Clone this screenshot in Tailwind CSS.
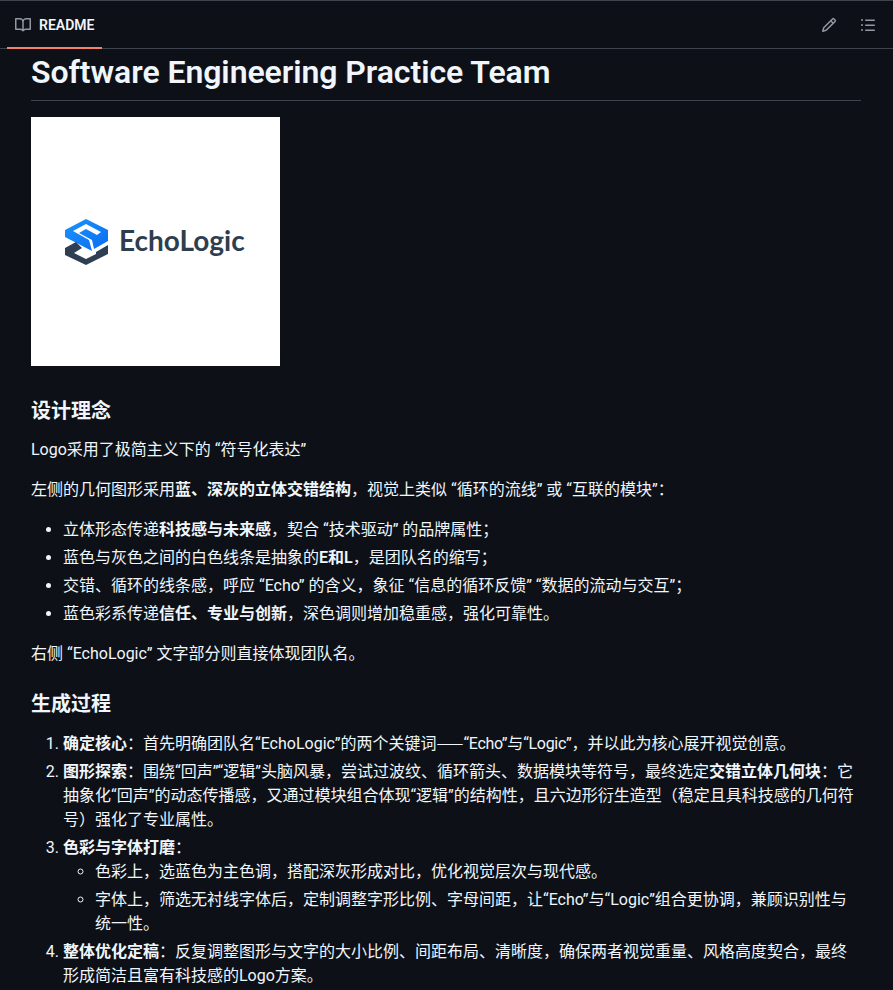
<!DOCTYPE html>
<html lang="en">
<head>
    <meta charset="UTF-8">
    <title>README</title>
    <script src="https://cdn.jsdelivr.net/npm/@tailwindcss/browser@4"></script>
</head>
<body class="bg-[#0d1117] text-[#f0f6fc] text-base leading-6 font-['Roboto','Noto_Sans_CJK_SC',sans-serif] overflow-hidden h-[990px]">

    <div class="border-t border-[#3d444d] h-[49px] border-b flex items-center justify-between relative">
        <div class="flex items-center pl-[15px] gap-2 h-full">
            <svg class="w-4 h-4 fill-[#9198a1]" viewBox="0 0 16 16"><path d="M0 1.75A.75.75 0 0 1 .75 1h4.253c1.227 0 2.317.59 3 1.501A3.743 3.743 0 0 1 11.006 1h4.245a.75.75 0 0 1 .75.75v10.5a.75.75 0 0 1-.75.75h-4.507a2.25 2.25 0 0 0-1.591.659l-.622.621a.75.75 0 0 1-1.06 0l-.622-.621A2.25 2.25 0 0 0 5.258 13H.75a.75.75 0 0 1-.75-.75Zm7.251 10.324.004-5.073-.002-2.253A2.25 2.25 0 0 0 5.003 2.5H1.5v9h3.757a3.75 3.75 0 0 1 1.994.574ZM8.755 4.75l-.004 7.322a3.752 3.752 0 0 1 1.992-.572H14.5v-9h-3.495a2.25 2.25 0 0 0-2.25 2.25Z"/></svg>
            <span class="text-sm font-semibold">README</span>
        </div>
        <div class="absolute left-[7px] bottom-[-1px] w-[95px] h-[2px] bg-[#f78166]"></div>
        <div class="flex items-center gap-[23px] pr-[17px]">
            <svg class="w-4 h-4 fill-[#9198a1]" viewBox="0 0 16 16"><path d="M11.013 1.427a1.75 1.75 0 0 1 2.474 0l1.086 1.086a1.75 1.75 0 0 1 0 2.474l-8.61 8.61c-.21.21-.47.364-.756.445l-3.251.93a.75.75 0 0 1-.927-.928l.929-3.25c.081-.286.235-.547.445-.758l8.61-8.61Zm.176 4.823L9.75 4.81l-6.286 6.287a.253.253 0 0 0-.064.108l-.558 1.953 1.953-.558a.253.253 0 0 0 .108-.064Zm1.238-3.763a.25.25 0 0 0-.354 0L10.811 3.75l1.439 1.44 1.263-1.263a.25.25 0 0 0 0-.354Z"/></svg>
            <svg class="w-4 h-4 fill-[#9198a1]" viewBox="0 0 16 16"><path d="M5.75 2.5h8.5a.75.75 0 0 1 0 1.5h-8.5a.75.75 0 0 1 0-1.5Zm0 5h8.5a.75.75 0 0 1 0 1.5h-8.5a.75.75 0 0 1 0-1.5Zm0 5h8.5a.75.75 0 0 1 0 1.5h-8.5a.75.75 0 0 1 0-1.5ZM2 14a1 1 0 1 1 0-2 1 1 0 0 1 0 2Zm1-6a1 1 0 1 1-2 0 1 1 0 0 1 2 0ZM2 4a1 1 0 1 1 0-2 1 1 0 0 1 0 2Z"/></svg>
        </div>
    </div>

    <div class="pl-[31px] pr-[32px] pt-[3px]">
        <h1 class="text-[32px] leading-10 font-semibold tracking-[-0.06px] pb-2 border-b border-[#3d444d] mb-4">Software Engineering Practice Team</h1>

        <div class="w-[249px] h-[249px] bg-white flex items-center gap-[10px] pl-[33px]">
            <svg class="w-[45px] h-[48px] shrink-0" viewBox="0 0 45 48">
                <defs>
                    <linearGradient id="blue" x1="0" y1="0" x2="1" y2="1">
                        <stop offset="0" stop-color="#1b93ff"/>
                        <stop offset="1" stop-color="#0a6cf0"/>
                    </linearGradient>
                </defs>
                <path d="M22 1 L44 12 L44 23 L30 31 L28 22 L15 15 L22 11 L33 17 L37 14 L22 6 L9 13 L25 22 L28 33 L1 19 L1 12 Z" fill="url(#blue)"/>
                <path d="M12 24 L1 30 L1 37 L22 47 L44 36 L44 27 L32 34 L32 36 L22 41 L10 35 L18 30 Z" fill="#2f3e52"/>
            </svg>
            <span class="text-[28px] leading-none font-bold text-[#2f3e4e] font-['Lato',sans-serif] pb-[3px]">EchoLogic</span>
        </div>

        <h3 class="text-xl leading-[25px] font-semibold mt-[33px] mb-[14px]">设计理念</h3>
        <p class="mb-4">Logo采用了极简主义下的 “符号化表达”</p>
        <p class="mb-4">左侧的几何图形采用<strong class="font-semibold">蓝、深灰的立体交错结构</strong>，视觉上类似 “循环的流线” 或 “互联的模块”：</p>
        <ul class="list-disc pl-8 mb-4 space-y-1">
            <li>立体形态传递<strong class="font-semibold">科技感与未来感</strong>，契合 “技术驱动” 的品牌属性；</li>
            <li>蓝色与灰色之间的白色线条是抽象的<strong class="font-semibold">E和L</strong>，是团队名的缩写；</li>
            <li>交错、循环的线条感，呼应 “Echo” 的含义，象征 “信息的循环反馈” “数据的流动与交互”；</li>
            <li>蓝色彩系传递<strong class="font-semibold">信任、专业与创新</strong>，深色调则增加稳重感，强化可靠性。</li>
        </ul>
        <p class="mb-4">右侧 “EchoLogic” 文字部分则直接体现团队名。</p>

        <h3 class="text-xl leading-[25px] font-semibold mt-[26px] mb-[13px]">生成过程</h3>
        <ol class="list-decimal pl-8 space-y-1">
            <li><strong class="font-semibold">确定核心</strong>：首先明确团队名“EchoLogic”的两个关键词<span class="font-['Noto_Sans_CJK_SC']">——</span><span class="tracking-[-0.3px]">“Echo”</span>与<span class="tracking-[-0.3px]">“Logic”</span>，并以此为核心展开视觉创意。</li>
            <li><strong class="font-semibold">图形探索</strong>：围绕“回声”“逻辑”头脑风暴，尝试过波纹、循环箭头、数据模块等符号，最终选定<strong class="font-semibold">交错立体几何块</strong>：它抽象化“回声”的动态传播感，又通过模块组合体现“逻辑”的结构性，且六边形衍生造型（稳定且具科技感的几何符号）强化了专业属性。</li>
            <li><strong class="font-semibold">色彩与字体打磨</strong>：
                <ul class="list-[circle] pl-8 space-y-1">
                    <li>色彩上，选蓝色为主色调，搭配深灰形成对比，优化视觉层次与现代感。</li>
                    <li>字体上，筛选无衬线字体后，定制调整字形比例、字母间距，让“Echo”与“Logic”组合更协调，兼顾识别性与统一性。</li>
                </ul>
            </li>
            <li><strong class="font-semibold">整体优化定稿</strong>：反复调整图形与文字的大小比例、间距布局、清晰度，确保两者视觉重量、风格高度契合，最终形成简洁且富有科技感的Logo方案。</li>
        </ol>
    </div>

</body>
</html>
